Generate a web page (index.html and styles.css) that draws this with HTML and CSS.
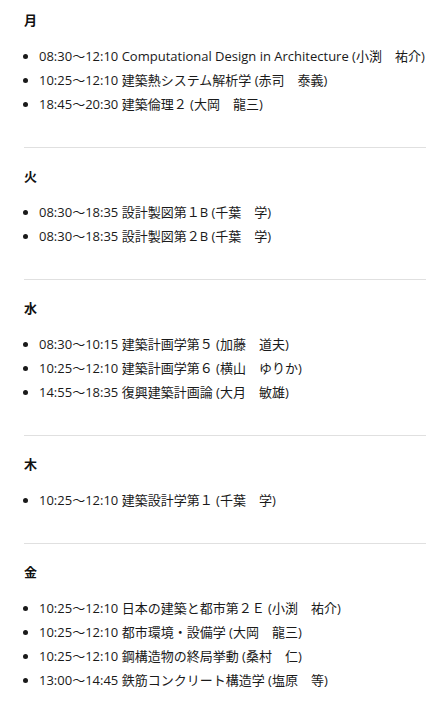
FILE: index.html
```html
<!DOCTYPE html>
<html lang="ja">
<head>
<meta charset="utf-8">
<link rel="stylesheet" href="styles.css">
</head>
<body>
<div class="week">
  <section class="day">
    <h3 class="day-title">月</h3>
    <ul class="classes">
      <li>08:30〜12:10 Computational Design in Architecture (小渕　祐介)</li>
      <li>10:25〜12:10 建築熱システム解析学 (赤司　泰義)</li>
      <li>18:45〜20:30 建築倫理２ (大岡　龍三)</li>
    </ul>
  </section>
  <hr class="sep">
  <section class="day">
    <h3 class="day-title">火</h3>
    <ul class="classes">
      <li>08:30〜18:35 設計製図第１B (千葉　学)</li>
      <li>08:30〜18:35 設計製図第２B (千葉　学)</li>
    </ul>
  </section>
  <hr class="sep">
  <section class="day">
    <h3 class="day-title">水</h3>
    <ul class="classes">
      <li>08:30〜10:15 建築計画学第５ (加藤　道夫)</li>
      <li>10:25〜12:10 建築計画学第６ (横山　ゆりか)</li>
      <li>14:55〜18:35 復興建築計画論 (大月　敏雄)</li>
    </ul>
  </section>
  <hr class="sep">
  <section class="day">
    <h3 class="day-title">木</h3>
    <ul class="classes">
      <li>10:25〜12:10 建築設計学第１ (千葉　学)</li>
    </ul>
  </section>
  <hr class="sep">
  <section class="day">
    <h3 class="day-title">金</h3>
    <ul class="classes">
      <li>10:25〜12:10 日本の建築と都市第２Ｅ (小渕　祐介)</li>
      <li>10:25〜12:10 都市環境・設備学 (大岡　龍三)</li>
      <li>10:25〜12:10 鋼構造物の終局挙動 (桑村　仁)</li>
      <li>13:00〜14:45 鉄筋コンクリート構造学 (塩原　等)</li>
    </ul>
  </section>
</div>
</body>
</html>
```

FILE: styles.css
```css
html, body {
  margin: 0;
  padding: 0;
  background: #ffffff;
}
body {
  font-family: "Open Sans", "Noto Sans CJK JP", sans-serif;
  font-size: 13px;
  color: #1a1a1a;
}
.week {
  padding: 10px 0 0 24px;
}
.day-title {
  margin: 0;
  font-size: 13px;
  font-weight: bold;
  line-height: 20px;
  color: #111;
}
.classes {
  margin: 14px 0 0 0;
  padding: 0 0 0 15px;
  list-style: disc;
}
.classes li {
  line-height: 24px;
  white-space: nowrap;
}
.sep {
  border: 0;
  border-top: 1px solid #e0e0e0;
  margin: 31px 0 18px 0;
  height: 0;
}
```
